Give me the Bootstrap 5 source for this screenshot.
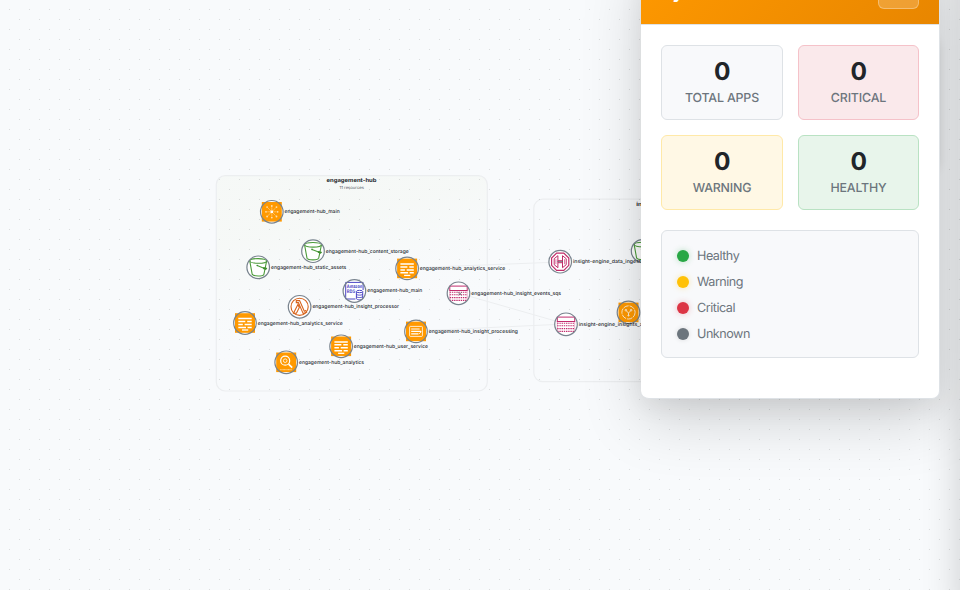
<!DOCTYPE html>
<html lang="en">
<head>
<meta charset="utf-8">
<meta name="viewport" content="width=device-width, initial-scale=1">
<title>System Health</title>
<link href="https://cdn.jsdelivr.net/npm/bootstrap@5.3.0/dist/css/bootstrap.min.css" rel="stylesheet">
<style>
body{font-family:Inter,"Liberation Sans",sans-serif;background:#f8fafc;width:960px;height:590px}
.stage{width:960px;height:590px;background-color:#f8fafc}
.topology text{font-family:Inter,"Liberation Sans",sans-serif;fill:#25292e;text-rendering:geometricPrecision}
.node-label{font-size:4.9px;font-weight:500}
.health-panel{left:641px;top:-41px;width:299px;height:440px;border-radius:8px;border:solid #dee2e6;border-width:0 1px 1px 0;box-shadow:0 20px 60px rgba(0,0,0,.17),0 8px 24px rgba(0,0,0,.06)}
.health-head{height:66px;padding:15px 20px;background:linear-gradient(135deg,#ff9900,#e88600);background-clip:padding-box;border-bottom:1px solid #dee2e6;border-radius:8px 8px 0 0}
.health-title{font-size:18px;line-height:36px;letter-spacing:-.4px}
.head-btn{width:41px;height:35px;background:rgba(255,255,255,.2);border:1px solid rgba(255,255,255,.3);border-radius:6px}
.health-body{padding:20px}
.stat-grid{display:grid;grid-template-columns:122px 121px;gap:15px}
.stat{height:75px;border:1px solid #dee2e6;border-radius:6px;background:#f8f9fb;padding-top:10px}
.stat b{display:block;font-size:24.5px;line-height:30px;font-weight:700;color:#212529;text-rendering:geometricPrecision;letter-spacing:-.5px}
.stat span{display:block;font-size:12.4px;line-height:15px;margin-top:4px;font-weight:500;color:#6c757d;letter-spacing:-.16px;text-rendering:geometricPrecision}
.stat.is-critical{background:#fae9eb;border-color:#f5c2c9}
.stat.is-warning{background:#fff8e5;border-color:#ffe9a8}
.stat.is-healthy{background:#e8f5eb;border-color:#b9e2c3}
.legend-box{height:128px;margin-top:20px;padding:13px 15px 11px;border:1px solid #dee2e6;border-radius:6px;background:#f8f9fb;font-size:12.6px;letter-spacing:-.48px;color:#6c757d;text-rendering:geometricPrecision}
.legend-box div{height:26px;gap:8px}
.dot{width:12px;height:12px;margin-bottom:3px;border-radius:50%;box-shadow:0 0 5px rgba(0,0,0,.12)}
.dot.ok{background:#28a745;box-shadow:0 0 6px rgba(40,167,69,.3)}
.dot.warn{background:#ffc107;box-shadow:0 0 6px rgba(255,193,7,.3)}
.dot.crit{background:#dc3545;box-shadow:0 0 6px rgba(220,53,69,.3)}
.dot.unk{background:#6c757d}
.panel-depth{left:681px;top:38px;width:256px;height:130px;border-radius:8px;box-shadow:0 2px 12px rgba(0,0,0,.16)}
.side-drawer{left:960px;top:-60px;width:300px;height:680px;box-shadow:-3px 0 34px rgba(0,0,0,.16)}
</style>
<script src="https://cdn.jsdelivr.net/npm/bootstrap@5.3.0/dist/js/bootstrap.bundle.min.js"></script>
</head>
<body class="overflow-hidden">
<main class="stage position-relative overflow-hidden">
<svg class="topology d-block" width="960" height="590" viewBox="0 0 960 590">
<defs>
<linearGradient id="groupFill" x1="0" y1="0" x2=".3" y2="1"><stop offset=".3" stop-color="#f5f8f5" stop-opacity=".75"/><stop offset=".85" stop-color="#f8fafc" stop-opacity="0"/></linearGradient>
<pattern id="dots" width="20" height="20" patternUnits="userSpaceOnUse"><path d="M9 9h1v1h-1zM19 19h1v1h-1z" fill="#000" fill-opacity=".12" shape-rendering="crispEdges"/></pattern>
<g id="ring"><circle r="11.3" fill="none" stroke="#78838e" stroke-width="1.2"/></g>
<g id="orange"><circle r="11.3" fill="#fff"/><rect x="-10" y="-9.8" width="20" height="19.6" fill="#f90"/></g>
<g id="hub"><use href="#orange"/><g stroke="#ffe0b0" stroke-width=".5"><path d="M0-4.6V4.6M-4.6 0H4.6M-3.8-3.8L3.8 3.8M3.8-3.8L-3.8 3.8"/></g><rect x="-1.2" y="-1.2" width="2.4" height="2.4" fill="#fff"/><g fill="#ffe0b0"><circle cy="-5.8" r=".9"/><circle cy="5.8" r=".9"/><circle cx="-5.8" r=".9"/><circle cx="5.8" r=".9"/><circle cx="-4.7" cy="-4.7" r=".9"/><circle cx="4.7" cy="-4.7" r=".9"/><circle cx="-4.7" cy="4.7" r=".9"/><circle cx="4.7" cy="4.7" r=".9"/></g><use href="#ring"/></g>
<g id="bucket"><circle r="11.3" fill="#fff"/><g fill="none" stroke="#4b9b3a" stroke-width="1.1"><ellipse cy="-6.4" rx="8.4" ry="2.3"/><path d="M-8.4-6.2L-6 7C-5 9.2 5 9.2 5.7 7L8.4-6.2M-1-1.8L7.5 1.6"/></g><circle cx="-1" cy="-1.8" r=".8" fill="#3c8b2c"/><path d="M5.2-.2L9.2.8 7.8 2.6 4.8 1.6z" fill="#3c8b2c"/><use href="#ring"/></g>
<g id="service"><use href="#orange"/><g stroke="#fff" stroke-width="1.5"><path d="M-6.7-4.4H6.7M-6.7-1.5H.3M2.2-1.5H6.7M-6.7 1.5H-2.2M-.4 1.5H6.7M-6.7 4.4H1M2.5 4.4H6.7"/><path d="M-3 7H3.2" stroke-width="1.3"/></g><use href="#ring"/></g>
<g id="stream"><use href="#orange"/><rect x="-6.4" y="-5" width="12.8" height="10" rx=".8" fill="none" stroke="#fff" stroke-width=".8"/><path d="M-4.8-2.4H3.6M-4.8 0H5M-4.8 2.5H2.5" stroke="#fff" stroke-width="1.2"/><path d="M3 2.5L5.5.2" stroke="#fff" stroke-width=".8"/><use href="#ring"/></g>
<g id="search"><use href="#orange"/><g fill="none" stroke="#fff"><circle cx="-1" cy="-1.6" r="4.5" stroke-width="1.2"/><circle cx="-1" cy="-1.6" r="1.8" stroke-width=".8"/><path d="M2.4 1.8L6 5.3" stroke-width="1.6"/><path d="M-6 7.4H5.5" stroke-width=".6" stroke-dasharray="1 .3"/></g><use href="#ring"/></g>
<g id="lambda"><circle r="11.3" fill="#fff"/><g fill="none" stroke="#d8641c" stroke-width="1.1"><circle r="8.6"/><path d="M-3.3-6.2H0L4.7 4.5 6.2 3.8 7 5.5 3.6 6.8-1.2-4.2H-3.3zM-1.7-2.3L-6.1 6.5H-3.2L-.3.6z"/></g><use href="#ring"/></g>
<g id="rds"><circle r="11.3" fill="#fff"/><path d="M-8.7 8V-8.6H8.7V-1M-8.7 8H1" fill="none" stroke="#4b46c4" stroke-width="1"/><text x="-7.6" y="-3.1" style="font-size:4.8px;font-weight:700;fill:#4b46c4" textLength="15.4" lengthAdjust="spacingAndGlyphs">Amazon</text><text x="-7.6" y="1.5" style="font-size:4.8px;font-weight:700;fill:#4b46c4" textLength="8.4" lengthAdjust="spacingAndGlyphs">RDS</text><g fill="#fff" stroke="#4b46c4" stroke-width="1"><path d="M2 .5V7.5C2 9.2 8.3 9.2 8.3 7.5V.5"/><ellipse cx="5.15" cy=".5" rx="3.15" ry="1.2"/><path d="M2 3C2 4.5 8.3 4.5 8.3 3M2 5.4C2 6.9 8.3 6.9 8.3 5.4" fill="none"/></g><use href="#ring"/></g>
<g id="queue"><circle r="11.3" fill="#fff"/><rect x="-8.7" y="-7.2" width="17.4" height="4.4" fill="#fff" stroke="#c22c6e" stroke-width="1"/><g stroke="#c22c6e" stroke-width="1.1" stroke-dasharray="1.4 .8"><path d="M-8.8-1H8.8M-8.8 1.5H8.8M-8.8 4.3H8.8M-8.8 7.1H8.8"/></g><path d="M-8.7-2.8V7M8.7-2.8V7" stroke="#c22c6e" stroke-width=".7" stroke-dasharray="1 1"/><use href="#ring"/></g>
<g id="gateway"><circle r="11.3" fill="#fff"/><g fill="none" stroke="#c12c69" stroke-width="1.2"><path d="M-3.6-8.6H3.6L8.6-3.6V3.6L3.6 8.6H-3.6L-8.6 3.6V-3.6z"/><path d="M-2.3-6V6L-6 3V-3zM2.3-6V6L6 3V-3zM-2.3-1H2.3M-2.3 1H2.3" stroke-width="1"/><path d="M-4.3-2.5V2.5M4.3-2.5V2.5" stroke-width=".6"/></g><use href="#ring"/></g>
<g id="eye"><use href="#orange"/><g fill="none" stroke="#fff" stroke-width=".8"><circle r="6.6" stroke-dasharray="5.5 .9"/><path d="M0 3V.7L-2-1.5M0 .7L2-1.5"/><circle cx="-2.6" cy="-2.2" r=".8"/><circle cx="2.6" cy="-2.2" r=".8"/><circle cy="3.1" r=".6"/></g><use href="#ring"/></g>
</defs>
<g stroke="#eceef0" stroke-width="1.2">
<rect x="216.3" y="175.6" width="271" height="215.4" rx="9" fill="url(#groupFill)"/>
<rect x="533.8" y="199.2" width="270" height="182.5" rx="9" fill="none"/>
</g>
<rect width="960" height="590" fill="url(#dots)"/>
<g stroke="#eceef0" stroke-width="1"><path d="M407 268L560 262M458 293L566 324M416 331L566 324"/></g>
<text x="326.5" y="182.2" textLength="50" lengthAdjust="spacingAndGlyphs" style="font-size:5.6px;font-weight:700">engagement-hub</text>
<text x="339.5" y="189" textLength="24.5" lengthAdjust="spacingAndGlyphs" style="font-size:4.1px;fill:#4e555c">11 resources</text>
<text x="636.3" y="206.2" textLength="45" lengthAdjust="spacingAndGlyphs" style="font-size:5.6px;font-weight:700">insight-engine</text>
<use href="#hub" x="271.8" y="211.8"/><use href="#bucket" x="313" y="251.2"/><use href="#bucket" x="258.2" y="267.3"/>
<use href="#service" x="407.1" y="268.4"/><use href="#rds" x="354.4" y="291"/><use href="#queue" x="458.5" y="293.3"/>
<use href="#lambda" x="299.6" y="306.8"/><use href="#service" x="245" y="323"/><use href="#stream" x="416" y="331.4"/>
<use href="#service" x="341.1" y="346.3"/><use href="#search" x="286.2" y="362.3"/><use href="#gateway" x="560.2" y="261.7"/>
<use href="#queue" x="566" y="324.3"/><use href="#bucket" x="642.6" y="251"/><use href="#eye" x="628.5" y="312.4"/>
<g fill="none" stroke="#60656c" stroke-width=".7"><path d="M457.7 292.2L461.7 295.5M461.7 292.2L458.5 295.5"/><path d="M557.5 261.5H563"/></g>
<g class="node-label">
<text x="284.5" y="213.2" textLength="55.2" lengthAdjust="spacingAndGlyphs">engagement-hub_main</text>
<text x="325.8" y="253" textLength="83" lengthAdjust="spacingAndGlyphs">engagement-hub_content_storage</text>
<text x="271" y="268.9" textLength="75.3" lengthAdjust="spacingAndGlyphs">engagement-hub_static_assets</text>
<text x="419.8" y="270" textLength="85.5" lengthAdjust="spacingAndGlyphs">engagement-hub_analytics_service</text>
<text x="367.3" y="292.3" textLength="55" lengthAdjust="spacingAndGlyphs">engagement-hub_main</text>
<text x="471.3" y="295.2" textLength="89.8" lengthAdjust="spacingAndGlyphs">engagement-hub_insight_events_sqs</text>
<text x="312.4" y="308.4" textLength="86.5" lengthAdjust="spacingAndGlyphs">engagement-hub_insight_processor</text>
<text x="257.8" y="324.8" textLength="85" lengthAdjust="spacingAndGlyphs">engagement-hub_analytics_service</text>
<text x="428.8" y="333.2" textLength="89.2" lengthAdjust="spacingAndGlyphs">engagement-hub_insight_processing</text>
<text x="353.8" y="348.2" textLength="74.2" lengthAdjust="spacingAndGlyphs">engagement-hub_user_service</text>
<text x="299" y="364.2" textLength="65" lengthAdjust="spacingAndGlyphs">engagement-hub_analytics</text>
<text x="573" y="263.2" textLength="75.5" lengthAdjust="spacingAndGlyphs">insight-engine_data_ingestion</text>
<text x="578.8" y="326.2" textLength="83.5" lengthAdjust="spacingAndGlyphs">insight-engine_insights_analytics</text>
</g>
</svg>
<div class="side-drawer position-absolute"></div>
<div class="panel-depth position-absolute"></div>
<section class="health-panel position-absolute bg-white">
<header class="health-head d-flex justify-content-between">
<div class="health-title fw-bold text-white">System Health</div><div class="head-btn"></div>
</header>
<div class="health-body">
<div class="stat-grid text-center">
<div class="stat"><b>0</b><span>TOTAL APPS</span></div>
<div class="stat is-critical"><b>0</b><span>CRITICAL</span></div>
<div class="stat is-warning"><b>0</b><span>WARNING</span></div>
<div class="stat is-healthy"><b>0</b><span>HEALTHY</span></div>
</div>
<div class="legend-box">
<div class="d-flex align-items-center"><i class="dot ok"></i>Healthy</div>
<div class="d-flex align-items-center"><i class="dot warn"></i>Warning</div>
<div class="d-flex align-items-center"><i class="dot crit"></i>Critical</div>
<div class="d-flex align-items-center"><i class="dot unk"></i>Unknown</div>
</div>
</div>
</section>
</main>
</body>
</html>
